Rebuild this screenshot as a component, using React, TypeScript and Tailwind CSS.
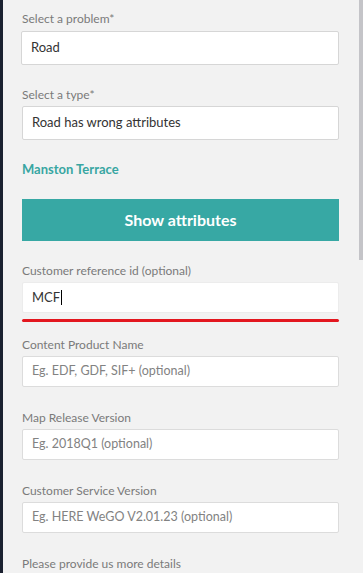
import React from 'react'

const font = { fontFamily: 'Lato, "Open Sans", sans-serif' }

function Label({ children, className = '' }: { children: React.ReactNode; className?: string }) {
  return <div className={`h-4 text-[12px] leading-4 text-[#7a7a7a] ${className}`}>{children}</div>
}

function Field({ label, placeholder, className = '' }: { label: string; placeholder: string; className?: string }) {
  return (
    <div className={className}>
      <Label>{label}</Label>
      <div className="mt-[3px] h-[31px] flex items-center px-[9px] bg-white border border-[#dcdcdc] rounded-[2px] text-[12.5px] text-[#828282]">
        {placeholder}
      </div>
    </div>
  )
}

export default function App() {
  return (
    <div className="relative w-[363px] h-[573px] overflow-hidden flex bg-[#f2f2f2]" style={font}>
      {/* dark edge of the map panel */}
      <div className="w-[3px] flex-none bg-[#1b2130]" />

      <div className="flex-1 pl-[18px] pr-[24px] pt-[11px]">
        <Label className="pl-[1px]">Select a problem*</Label>
        <div className="mt-1 h-[34px] flex items-center px-[9px] bg-white border border-[#d6d6d6] rounded-[2px] text-[13px] text-[#333]">
          Road
        </div>

        <div className="pl-[1px]">
          <Label className="mt-[22px]">Select a type*</Label>
          <div className="mt-[3px] h-[34px] flex items-center px-[9px] bg-white border border-[#d6d6d6] rounded-[2px] text-[13px] text-[#333]">
            Road has wrong attributes
          </div>

          <div className="mt-5 h-[18px] text-[13px] leading-[18px] font-bold text-[#38a6a2]">Manston Terrace</div>

          <button className="mt-[21px] w-full h-[42px] bg-[#37a8a4] text-white text-[16px] font-bold">
            Show attributes
          </button>

          <Label className="mt-[22px]">Customer reference id (optional)</Label>
          <div className="mt-[3px] h-[31px] flex items-center px-[9px] bg-white border border-[#ececec] rounded-[2px] text-[13px] text-[#333]">
            MCF<span className="ml-[1px] w-px h-[15px] bg-black" />
          </div>
          <div className="mt-[6px] h-[3px] rounded-full bg-[#e3171f]" />

          <Field className="mt-[15px]" label="Content Product Name" placeholder="Eg. EDF, GDF, SIF+ (optional)" />
          <Field className="mt-[23px]" label="Map Release Version" placeholder="Eg. 2018Q1 (optional)" />
          <Field className="mt-[23px]" label="Customer Service Version" placeholder="Eg. HERE WeGO V2.01.23 (optional)" />

          <Label className="mt-[23px]">Please provide us more details</Label>
        </div>
      </div>

      {/* scrollbar thumb */}
      <div className="absolute right-0 top-0 w-1 h-[260px] bg-[#c4c4c8]" />
    </div>
  )
}
